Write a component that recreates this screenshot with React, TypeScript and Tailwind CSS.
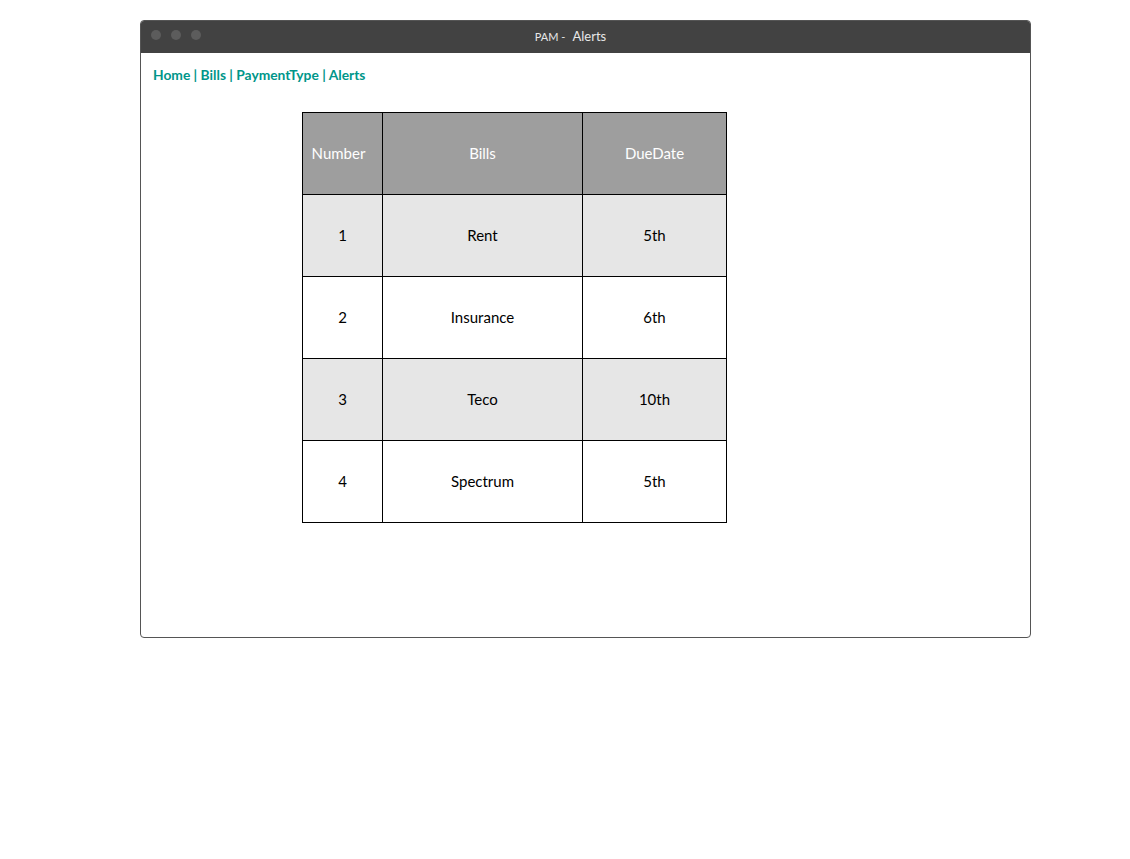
import React from "react";

const rows = [
  { n: "1", bill: "Rent", due: "5th" },
  { n: "2", bill: "Insurance", due: "6th" },
  { n: "3", bill: "Teco", due: "10th" },
  { n: "4", bill: "Spectrum", due: "5th" },
];

export default function App() {
  return (
    <div className="min-h-screen bg-white pt-[20px] font-['Lato','Open_Sans',sans-serif]">
      <div className="ml-[140px] w-[891px] h-[618px] border border-[#555] rounded-[4px] overflow-hidden flex flex-col">
        {/* Title bar */}
        <div className="h-[32px] bg-[#424242] relative flex items-center justify-center shrink-0">
          <div className="absolute left-[10px] top-[9px] flex gap-[10px]">
            <span className="w-[10px] h-[10px] rounded-full bg-[#5c5c5c]" />
            <span className="w-[10px] h-[10px] rounded-full bg-[#5c5c5c]" />
            <span className="w-[10px] h-[10px] rounded-full bg-[#5c5c5c]" />
          </div>
          <div className="flex items-baseline text-[#e8e8e8] ml-[-30px]">
            <span className="text-[11px]">PAM -</span>
            <span className="text-[13px] ml-[7px]">Alerts</span>
          </div>
        </div>

        {/* Nav */}
        <div className="pl-[12px] pt-[12px] text-[13.8px] font-bold text-[#00968a]">
          Home | Bills | PaymentType | Alerts
        </div>

        {/* Table */}
        <div className="pl-[161px] pt-[26px]">
          <table className="border-collapse text-[15px] text-black">
            <thead>
              <tr className="bg-[#9e9e9e] text-white h-[82px]">
                <th className="border border-black w-[80px] font-normal pr-[8px]">Number</th>
                <th className="border border-black w-[200px] font-normal">Bills</th>
                <th className="border border-black w-[144px] font-normal">DueDate</th>
              </tr>
            </thead>
            <tbody>
              {rows.map((r, i) => (
                <tr key={r.n} className={`h-[82px] ${i % 2 === 0 ? "bg-[#e6e6e6]" : "bg-white"}`}>
                  <td className="border border-black text-center">{r.n}</td>
                  <td className="border border-black text-center">{r.bill}</td>
                  <td className="border border-black text-center">{r.due}</td>
                </tr>
              ))}
            </tbody>
          </table>
        </div>
      </div>
    </div>
  );
}
